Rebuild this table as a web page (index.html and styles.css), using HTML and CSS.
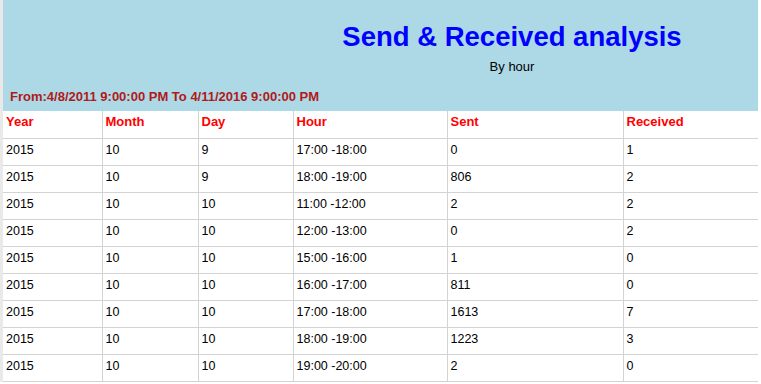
FILE: index.html
```html
<!DOCTYPE html>
<html>
<head>
<meta charset="utf-8">
<link rel="stylesheet" href="styles.css">
</head>
<body>
<div class="page">
  <header class="banner">
    <div class="banner-grid">
      <div class="spacer"></div>
      <div class="titles">
        <h1 class="title">Send &amp; Received analysis</h1>
        <div class="subtitle">By hour</div>
      </div>
    </div>
    <div class="range">From:4/8/2011 9:00:00 PM To 4/11/2016 9:00:00 PM</div>
  </header>
  <table class="report">
    <colgroup>
      <col class="c1"><col class="c2"><col class="c3"><col class="c4"><col class="c5"><col class="c6">
    </colgroup>
    <thead>
      <tr><th>Year</th><th>Month</th><th>Day</th><th>Hour</th><th>Sent</th><th>Received</th></tr>
    </thead>
    <tbody>
      <tr><td>2015</td><td>10</td><td>9</td><td>17:00 -18:00</td><td>0</td><td>1</td></tr>
      <tr><td>2015</td><td>10</td><td>9</td><td>18:00 -19:00</td><td>806</td><td>2</td></tr>
      <tr><td>2015</td><td>10</td><td>10</td><td>11:00 -12:00</td><td>2</td><td>2</td></tr>
      <tr><td>2015</td><td>10</td><td>10</td><td>12:00 -13:00</td><td>0</td><td>2</td></tr>
      <tr><td>2015</td><td>10</td><td>10</td><td>15:00 -16:00</td><td>1</td><td>0</td></tr>
      <tr><td>2015</td><td>10</td><td>10</td><td>16:00 -17:00</td><td>811</td><td>0</td></tr>
      <tr><td>2015</td><td>10</td><td>10</td><td>17:00 -18:00</td><td>1613</td><td>7</td></tr>
      <tr><td>2015</td><td>10</td><td>10</td><td>18:00 -19:00</td><td>1223</td><td>3</td></tr>
      <tr><td>2015</td><td>10</td><td>10</td><td>19:00 -20:00</td><td>2</td><td>0</td></tr>
    </tbody>
  </table>
</div>
</body>
</html>
```
FILE: styles.css
```css
html, body {
  margin: 0;
  padding: 0;
  background: #ffffff;
}
body {
  font-family: "Liberation Sans", Arial, sans-serif;
  font-size: 12px;
  color: #000;
}
.page {
  width: 755px;
  border-left: 3px solid #e9e9e9;
}
.banner {
  background: #add8e6;
  height: 111px;
  box-sizing: border-box;
  padding-top: 20px;
}
.banner-grid {
  display: grid;
  grid-template-columns: 263px 1fr;
}
.titles {
  text-align: center;
}
.title {
  margin: 0;
  font-size: 27.5px;
  line-height: 34px;
  font-weight: bold;
  color: #0000ff;
}
.subtitle {
  margin-top: 5px;
  font-size: 13px;
  line-height: 15px;
}
.range {
  margin-top: 15px;
  padding-left: 7px;
  font-size: 13px;
  line-height: 15px;
  font-weight: bold;
  color: #b01a1a;
}
.report {
  width: 755px;
  border-collapse: collapse;
  table-layout: fixed;
}
.c1 { width: 99px; }
.c2 { width: 96px; }
.c3 { width: 95px; }
.c4 { width: 154px; }
.c5 { width: 176px; }
.c6 { width: 135px; }
.report th, .report td {
  border: 1px solid #d3d3d3;
  text-align: left;
  vertical-align: top;
  padding: 0 3px;
  box-sizing: border-box;
}
.report tr > :first-child { border-left: none; }
.report tr > :last-child { border-right: none; }
.report thead th {
  border-top: none;
  color: #ff0000;
  font-weight: bold;
  font-size: 13px;
  line-height: 15px;
  padding-top: 3px;
  height: 27px;
}
.report td {
  font-size: 12.5px;
  line-height: 14px;
  padding-top: 4px;
  height: 27px;
}
```
